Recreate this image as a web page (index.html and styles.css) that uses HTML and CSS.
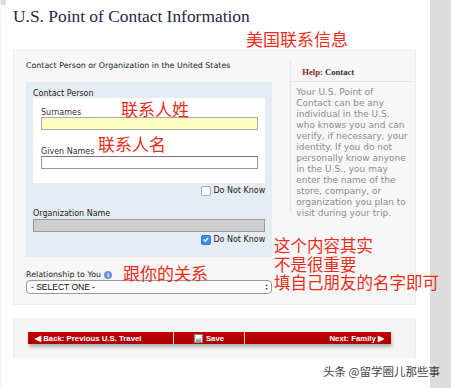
FILE: index.html
```html
<!DOCTYPE html>
<html lang="en">
<head>
  <meta charset="UTF-8">
  <title>U.S. Point of Contact Information</title>
  <link rel="stylesheet" href="styles.css">
</head>
<body>
  <div class="page">
    <div class="main">
      <span class="corner"></span>
      <h1 class="title">U.S. Point of Contact Information</h1>

      <div class="panel">
        <div class="form-col">
          <div class="section-title">Contact Person or Organization in the United States</div>
          <div class="blue-box">
            <div class="box-label">Contact Person</div>
            <div class="white-box">
              <label class="field-label">Surnames</label>
              <input type="text" class="field field-active">
              <label class="field-label">Given Names</label>
              <input type="text" class="field">
            </div>
            <div class="check-row">
              <span class="check"></span>Do Not Know
            </div>
            <div class="box-label org-label">Organization Name</div>
            <input type="text" class="field field-disabled" disabled>
            <div class="check-row">
              <span class="check checked">
                <svg width="9" height="9" viewBox="0 0 9 9"><path d="M2 4.6 L3.8 6.4 L7 2.6" stroke="#fff" stroke-width="1.5" fill="none"/></svg>
              </span>Do Not Know
            </div>
          </div>
          <div class="rel-label">Relationship to You <span class="info">i</span></div>
          <div class="select">
            <span>- SELECT ONE -</span>
            <span class="arrows">&#9650;<br>&#9660;</span>
          </div>
        </div>

        <div class="help">
          <div class="help-head"><b>Help:</b> Contact</div>
          <p class="help-text">Your U.S. Point of Contact can be any individual in the U.S. who knows you and can verify, if necessary, your identity. If you do not personally know anyone in the U.S., you may enter the name of the store, company, or organization you plan to visit during your trip.</p>
        </div>
      </div>

      <div class="nav-panel">
        <div class="nav-bar">
          <span class="nav-btn back">&#9664; Back: Previous U.S. Travel</span>
          <span class="nav-btn save">
            <svg width="9" height="9" viewBox="0 0 9 9"><rect x="0.5" y="0.5" width="8" height="8" fill="#ddd" stroke="#888"/><rect x="2" y="1" width="5" height="3" fill="#fff"/><rect x="2" y="5.5" width="5" height="3" fill="#999"/></svg>
            Save
          </span>
          <span class="nav-btn next">Next: Family &#9654;</span>
        </div>
      </div>

      <div class="note note-title">美国联系信息</div>
      <div class="note note-surname">联系人姓</div>
      <div class="note note-given">联系人名</div>
      <div class="note note-rel">跟你的关系</div>
      <div class="note note-side">这个内容其实<br>不是很重要<br>填自己朋友的名字即可</div>
      <div class="watermark">头条 @留学圈儿那些事</div>
    </div>
    <div class="strip"></div>
  </div>
</body>
</html>
```

FILE: styles.css
```css
body {
  margin: 0;
  background: #fff;
  font-family: "DejaVu Sans", Verdana, sans-serif;
  color: #333;
}

.page {
  display: flex;
  width: 451px;
  height: 388px;
  overflow: hidden;
}

.main {
  position: relative;
  width: 426px;
  padding-left: 12px;
  box-sizing: border-box;
  border-left: 1px solid #f2f2f2;
}

.strip {
  flex: 1;
  background: #dcdcdc;
  margin-left: 4px;
}

.corner {
  position: absolute;
  left: 0;
  top: 0;
  width: 5px;
  height: 5px;
  background: #ddd;
}

.title {
  margin: 0;
  padding-top: 6px;
  height: 50px;
  box-sizing: border-box;
  font-family: "Liberation Serif", "Times New Roman", serif;
  font-weight: normal;
  font-size: 17.4px;
  color: #262648;
}

.panel {
  display: flex;
  width: 403px;
  height: 255px;
  box-sizing: border-box;
  background: #f7f7f7;
  border: 1px solid #ededed;
  padding: 10px 3px 0 12px;
}

.form-col {
  width: 247px;
}

.section-title {
  font-size: 7.9px;
  color: #222;
  height: 21px;
}

.blue-box {
  background: #e6ecf3;
  padding: 7px 7px 0 7px;
  height: 175px;
  box-sizing: border-box;
}

.box-label {
  font-size: 8px;
  color: #222;
  height: 9px;
}

.white-box {
  background: #fff;
  padding: 10px 7px 14px 8px;
  display: flex;
  flex-direction: column;
}

.field-label {
  font-size: 8px;
  color: #333;
  height: 9px;
}

.field {
  display: block;
  width: 100%;
  height: 13px;
  box-sizing: border-box;
  border: 1px solid #999;
  border-top-color: #777;
  background: #fff;
  margin: 0 0 17px 0;
  padding: 0;
}

.white-box .field:last-child {
  margin-bottom: 0;
}

.field-active {
  background: #ffffc4;
  border-color: #aaa;
}

.field-disabled {
  background: #cfcfcf;
  border-color: #999;
  margin: 1px 0 0 0;
}

.check-row {
  display: flex;
  justify-content: flex-end;
  align-items: center;
  font-size: 8px;
  color: #222;
  height: 13px;
  margin-top: 1px;
  gap: 2px;
}

.check {
  display: inline-flex;
  align-items: center;
  justify-content: center;
  width: 8px;
  height: 8px;
  border: 1px solid #aaa;
  border-radius: 2px;
  background: #fff;
}

.check.checked {
  background: #3a8ee6;
  border-color: #2f7fd6;
}

.org-label {
  margin-top: 12px;
}

.rel-label {
  margin-top: 13px;
  font-size: 7.9px;
  color: #222;
  display: flex;
  align-items: center;
  gap: 3px;
}

.info {
  display: inline-flex;
  align-items: center;
  justify-content: center;
  width: 8px;
  height: 8px;
  border-radius: 50%;
  background: #6f8fd8;
  color: #fff;
  font-size: 6px;
  font-weight: bold;
  font-family: "Liberation Serif", serif;
}

.select {
  display: flex;
  justify-content: space-between;
  align-items: center;
  height: 12px;
  margin-top: 1px;
  border: 1px solid #999;
  border-radius: 4px;
  background: #fbfbfb;
  font-family: "Liberation Sans", Arial, sans-serif;
  font-size: 8.5px;
  color: #111;
  padding: 0 3px 0 4px;
}

.arrows {
  font-size: 3.5px;
  line-height: 4px;
  color: #333;
}

.help {
  margin-left: 18px;
  width: 122px;
  height: 152px;
  border-left: 1px solid #e6e6e6;
  padding-left: 5px;
  box-sizing: border-box;
}

.help-head {
  font-family: "Liberation Serif", serif;
  font-size: 8.6px;
  font-weight: bold;
  color: #333;
  padding: 6px 0 4px 11px;
  border-bottom: 1px solid #e6e6e6;
  margin-left: -5px;
}

.help-head b {
  color: #8a1c1c;
}

.help-text {
  width: 112px;
  margin: 5px 0 0 0;
  font-size: 9px;
  line-height: 11px;
  color: #8c8c8c;
}

.nav-panel {
  margin-top: 13px;
  width: 403px;
  height: 40px;
  box-sizing: border-box;
  background: #f4f4f4;
  border: 1px solid #eeeeee;
  padding: 13px 0 0 14px;
}

.nav-bar {
  display: flex;
  width: 363px;
  height: 12px;
  box-shadow: 1px 3px 3px rgba(0, 0, 0, 0.25);
}

.nav-btn {
  display: flex;
  align-items: center;
  gap: 3px;
  background: linear-gradient(#c40000, #a80000);
  color: #fff;
  font-family: "Liberation Sans", Arial, sans-serif;
  font-weight: bold;
  font-size: 7.8px;
  box-sizing: border-box;
}

.back {
  width: 146px;
  padding-left: 7px;
  border-right: 1px solid #f0d0d0;
}

.save {
  width: 71px;
  justify-content: center;
  border-right: 1px solid #f0d0d0;
}

.next {
  flex: 1;
  justify-content: flex-end;
  padding-right: 7px;
}

.note {
  position: absolute;
  color: #ec2c1a;
  font-family: "Noto Sans CJK SC", sans-serif;
  font-size: 17px;
  line-height: 18px;
  white-space: nowrap;
}

.note-title {
  left: 245px;
  top: 30px;
}

.note-surname {
  left: 120px;
  top: 100px;
}

.note-given {
  left: 97px;
  top: 135px;
}

.note-rel {
  left: 122px;
  top: 264px;
}

.note-side {
  left: 273px;
  top: 236px;
  font-size: 16.5px;
  line-height: 18.5px;
}

.watermark {
  position: absolute;
  left: 322px;
  top: 363px;
  font-family: "Noto Sans CJK SC", sans-serif;
  font-size: 11.5px;
  color: #444;
  white-space: nowrap;
}
```
